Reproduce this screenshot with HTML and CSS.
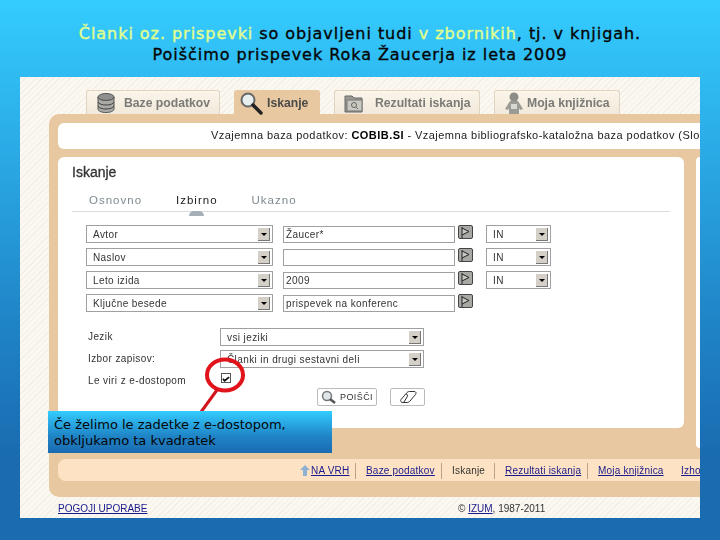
FILE: index.html
```html
<!DOCTYPE html>
<html lang="sl">
<head>
<meta charset="utf-8">
<title>Iskanje</title>
<link rel="stylesheet" href="styles.css">
</head>
<body>
<div class="slide">
  <header class="title">
    <div><span class="hl">Članki oz. prispevki</span> so objavljeni tudi <span class="hl">v zbornikih</span>, tj. v knjigah.</div>
    <div>Poiščimo prispevek Roka Žaucerja iz leta 2009</div>
  </header>
  <main class="shot">
    <nav class="tabs">
      <div class="tab tab-baze">
        <svg class="tab-icon" width="20" height="22" viewBox="0 0 20 22"><ellipse cx="10" cy="5" rx="8" ry="3.500" fill="#8f8f8f" stroke="#555"/><path d="M2 5v12c0 2 3.500 3.500 8 3.500s8-1.500 8-3.500V5c0 2-3.500 3.500-8 3.500S2 7 2 5z" fill="#a9a9a6" stroke="#555"/><path d="M2 10c1 2 4 3 8 3s7-1 8-3M2 14c1 2 4 3 8 3s7-1 8-3" fill="none" stroke="#444"/></svg>
        <span>Baze podatkov</span>
      </div>
      <div class="tab tab-active tab-isk">
        <svg class="tab-icon" width="26" height="24" viewBox="0 0 26 24"><circle cx="10" cy="9" r="6.500" fill="#e8edf0" stroke="#666" stroke-width="2"/><path d="M15 14l8 8" stroke="#222" stroke-width="3.500" stroke-linecap="round"/></svg>
        <span>Iskanje</span>
      </div>
      <div class="tab tab-rez">
        <svg class="tab-icon" width="20" height="20" viewBox="0 0 20 20"><path d="M1 3h7l2 2h8v14H1z" fill="#9a9a92" stroke="#666"/><rect x="3" y="7" width="15" height="11" fill="#c9c9bf" stroke="#777"/><circle cx="10" cy="12" r="2.500" fill="none" stroke="#666"/><path d="M12 14l2 2" stroke="#666"/></svg>
        <span>Rezultati iskanja</span>
      </div>
      <div class="tab tab-moja">
        <svg class="tab-icon" width="20" height="24" viewBox="0 0 20 24"><circle cx="10" cy="6" r="4.500" fill="#8d8d88"/><path d="M6 10h8l5 8-3 1-1-2v6H5v-6l-1 2-3-1z" fill="#9b9b96"/><rect x="7" y="13" width="6" height="5" fill="#d8d8d2"/></svg>
        <span>Moja knjižnica</span>
      </div>
    </nav>
    <section class="panel">
      <div class="infobar">Vzajemna baza podatkov: <b>COBIB.SI</b> - Vzajemna bibliografsko-kataložna baza podatkov (Slovenija)</div>
      <div class="content">
        <div class="card">
          <h1 class="card-title">Iskanje</h1>
          <div class="modes">
            <span class="mode mode-a">Osnovno</span>
            <span class="mode mode-b mode-on">Izbirno</span>
            <span class="mode mode-c">Ukazno</span>
          </div>
          <div class="form">
            <div class="row">
              <div class="sel"><span>Avtor</span><i class="arr"></i></div>
              <div class="inp">Žaucer*</div>
              <div class="flag"><svg width="11" height="11" viewBox="0 0 11 11"><path d="M2 0v11M2 1l7 3.500-7 3.500" fill="#c8c8c4" stroke="#222"/></svg></div>
              <div class="sel sel-op"><span>IN</span><i class="arr"></i></div>
            </div>
            <div class="row">
              <div class="sel"><span>Naslov</span><i class="arr"></i></div>
              <div class="inp"></div>
              <div class="flag"><svg width="11" height="11" viewBox="0 0 11 11"><path d="M2 0v11M2 1l7 3.500-7 3.500" fill="#c8c8c4" stroke="#222"/></svg></div>
              <div class="sel sel-op"><span>IN</span><i class="arr"></i></div>
            </div>
            <div class="row">
              <div class="sel"><span>Leto izida</span><i class="arr"></i></div>
              <div class="inp">2009</div>
              <div class="flag"><svg width="11" height="11" viewBox="0 0 11 11"><path d="M2 0v11M2 1l7 3.500-7 3.500" fill="#c8c8c4" stroke="#222"/></svg></div>
              <div class="sel sel-op"><span>IN</span><i class="arr"></i></div>
            </div>
            <div class="row">
              <div class="sel"><span>Ključne besede</span><i class="arr"></i></div>
              <div class="inp">prispevek na konferenc</div>
              <div class="flag"><svg width="11" height="11" viewBox="0 0 11 11"><path d="M2 0v11M2 1l7 3.500-7 3.500" fill="#c8c8c4" stroke="#222"/></svg></div>
            </div>
            <div class="limits">
              <label class="lim-label">Jezik</label>
              <div class="sel"><span>vsi jeziki</span><i class="arr"></i></div>
              <label class="lim-label">Izbor zapisov:</label>
              <div class="sel"><span>Članki in drugi sestavni deli</span><i class="arr"></i></div>
              <label class="lim-label">Le viri z e-dostopom</label>
              <div class="check"><svg width="9" height="9" viewBox="0 0 9 9"><path d="M1 5l2 2 5-4" fill="none" stroke="#111" stroke-width="2"/></svg></div>
            </div>
            <div class="actions">
              <div class="btn btn-go">
                <svg width="16" height="14" viewBox="0 0 16 14"><circle cx="6" cy="6" r="4.500" fill="#dfe6ea" stroke="#777" stroke-width="1.500"/><path d="M9 9l5 4" stroke="#555" stroke-width="2.500"/></svg>
                <span>POIŠČI</span>
              </div>
              <div class="btn btn-clear">
                <svg width="18" height="12" viewBox="0 0 18 12"><path d="M8 1.500c1-1 2-1 3-1h4c2 0 2.500 1.500 1.500 3L11 10c-1 1-2 1.500-3 1.500H4C2 11.500 1 10 2 8.500z" fill="#fff" stroke="#333"/><path d="M7 3c1.500 0 2 1.500 1 3l-3 5" fill="none" stroke="#333"/></svg>
              </div>
            </div>
          </div>
        </div>
        <div class="strip"></div>
      </div>
      <div class="bottomnav">
        <svg class="up" width="10" height="11" viewBox="0 0 10 11"><path d="M5 0l5 5H7v6H3V5H0z" fill="#8fb0d0"/></svg>
        <a class="nav-link nav-top">NA VRH</a>
        <a class="nav-link nav-baze">Baze podatkov</a>
        <span class="nav-cur">Iskanje</span>
        <a class="nav-link nav-rez">Rezultati iskanja</a>
        <a class="nav-link nav-moja">Moja knjižnica</a>
        <a class="nav-link nav-izh">Izhod</a>
      </div>
    </section>
    <footer class="foot">
      <a class="nav-link foot-l">POGOJI UPORABE</a>
      <span class="foot-c">© <a class="nav-link">IZUM</a>, 1987-2011</span>
    </footer>
  </main>
  <svg class="mark" width="720" height="540" viewBox="0 0 720 540">
    <ellipse cx="225" cy="375" rx="18" ry="15.500" fill="none" stroke="#e1141c" stroke-width="4"/>
    <path d="M217 390L201 412" stroke="#d2141c" stroke-width="3"/>
  </svg>
  <aside class="caption">Če želimo le zadetke z e-dostopom,<br>obkljukamo ta kvadratek</aside>
</div>
</body>
</html>
```
FILE: styles.css
```css
* { box-sizing: border-box; }
html, body { margin: 0; padding: 0; }
body { width: 720px; height: 540px; overflow: hidden; }

.slide {
  position: relative;
  width: 720px;
  height: 540px;
  overflow: hidden;
  background: linear-gradient(180deg, #34ccff 0%, #2aa8e4 30%, #1f84c6 60%, #1a6bb0 85%, #1a6bb0 100%);
}

.title {
  height: 77px;
  padding-top: 23px;
  text-align: center;
  font: 16px/21px "DejaVu Sans", sans-serif;
  letter-spacing: 0.95px;
  -webkit-text-stroke: 0.35px;
  color: #050505;
  white-space: nowrap;
}
.hl { color: #e2ff8c; }

.shot {
  width: 680px;
  height: 441px;
  margin-left: 20px;
  padding: 13px 0 0 29px;
  overflow: hidden;
  background-color: #fbf8f1;
  background-image: repeating-linear-gradient(135deg, #f4efe4 0 1px, #fbf8f1 1px 4px);
  font-family: "Liberation Sans", sans-serif;
  color: #333;
  filter: blur(0.3px);
}

.tabs { display: flex; height: 24px; margin-left: 37px; }
.tab {
  display: flex;
  align-items: center;
  height: 24px;
  padding-left: 9px;
  border: 1px solid #e0d3bf;
  border-bottom: 0;
  border-radius: 3px 3px 0 0;
  background: linear-gradient(#fbf5ea, #f1e9da);
  font-size: 12.200px;
  font-weight: bold;
  color: #7a7a76;
  white-space: nowrap;
}
.tab-active { background: #e8c8a0; border-color: #e8c8a0; color: #4a4a4a; padding-left: 3px; }
.tab-icon { flex: none; }
.tab-baze { width: 134px; gap: 8px; }
.tab-isk { width: 86px; margin-left: 14px; gap: 3px; }
.tab-rez { width: 146px; margin-left: 14px; gap: 11px; }
.tab-moja { width: 126px; margin-left: 14px; gap: 3px; }

.panel {
  width: 651px;
  height: 383px;
  padding: 9px 0 0 9px;
  overflow: hidden;
  border-radius: 10px 0 0 10px;
  background: #e8c8a0;
}

.infobar {
  height: 26px;
  padding-left: 153px;
  margin-bottom: 8px;
  border-radius: 6px 0 0 6px;
  background: #fff;
  font-size: 11px;
  letter-spacing: 0.45px;
  line-height: 25px;
  white-space: nowrap;
  overflow: hidden;
  color: #222;
}
.infobar b { color: #000; }

.content { display: flex; align-items: flex-start; gap: 12px; height: 302px; }
.card {
  flex: none;
  width: 626px;
  height: 271px;
  padding: 7px 14px 0;
  border-radius: 6px;
  background: #fff;
}
.card-title { margin: 0; font-size: 14px; line-height: 17px; font-weight: normal; color: #333; -webkit-text-stroke: 0.3px #333; }
.strip { flex: none; width: 4px; height: 291px; background: #fff; border-radius: 4px 0 0 4px; }

.modes { display: flex; height: 30px; padding-top: 13px; font-size: 11.500px; letter-spacing: 1px; color: #7f8a90; }
.mode-a { margin-left: 17px; }
.mode-b { margin-left: 34px; }
.mode-c { margin-left: 34px; }
.mode-on { color: #222; position: relative; }
.mode-on::after {
  content: "";
  position: absolute;
  left: 13px;
  bottom: -5px;
  width: 15px;
  height: 5px;
  border-radius: 8px 8px 0 0;
  background: #a4afb8;
}

.form { width: 598px; padding: 13px 0 0 14px; border-top: 1px solid #dcdcdc; font-size: 10px; letter-spacing: 0.4px; color: #333; }

.row { display: flex; align-items: flex-start; height: 23px; }
.sel {
  display: flex;
  flex: none;
  align-items: center;
  justify-content: space-between;
  width: 187px;
  height: 18px;
  padding: 0 2px 0 6px;
  border: 1px solid #a0a0a0;
  background: #fff;
  white-space: nowrap;
}
.sel-op { width: 65px; margin-left: 13px; }
.arr {
  flex: none;
  position: relative;
  width: 12px;
  height: 13px;
  background: #d4d0c8;
  border-right: 1px solid #777;
  border-bottom: 1px solid #777;
}
.arr::after {
  content: "";
  position: absolute;
  left: 3px;
  top: 5px;
  border: 3px solid transparent;
  border-top: 3px solid #000;
}
.inp {
  flex: none;
  width: 172px;
  height: 17px;
  margin: 1px 0 0 10px;
  padding-left: 2px;
  border: 1px solid #a0a0a0;
  background: #fff;
  line-height: 15px;
  white-space: nowrap;
  overflow: hidden;
}
.flag {
  display: flex;
  flex: none;
  align-items: center;
  justify-content: center;
  width: 15px;
  height: 14px;
  margin-left: 3px;
  border: 1px solid #444;
  border-radius: 2px;
  background: #a8a8a4;
}

.limits {
  display: grid;
  grid-template-columns: 132px 204px;
  grid-auto-rows: 22px;
  margin: 11px 0 0 2px;
  align-items: start;
}
.lim-label { line-height: 18px; color: #333; }
.limits .sel { width: 204px; }
.check {
  display: flex;
  align-items: center;
  justify-content: center;
  width: 10px;
  height: 10px;
  margin: 1px 0 0 1px;
  border: 1px solid #555;
  background: #fff;
}

.actions { display: flex; justify-content: flex-end; gap: 13px; width: 339px; margin-top: -6px; }
.btn {
  display: flex;
  align-items: center;
  justify-content: center;
  gap: 3px;
  height: 18px;
  border: 1px solid #bbb;
  border-radius: 2px;
  background: #fff;
  font-size: 9px;
}
.btn-go { width: 60px; }
.btn-clear { width: 35px; }

.bottomnav {
  display: flex;
  align-items: center;
  height: 22px;
  padding: 1px 0 0 242px;
  border-radius: 8px 0 0 8px;
  background: #fde3c3;
  font-size: 10px;
  letter-spacing: 0.2px;
  white-space: nowrap;
  color: #333;
}
.up { flex: none; margin-right: 1px; }
.nav-link { color: #1a1a8c; text-decoration: underline; }
.nav-top, .nav-baze, .nav-cur, .nav-rez, .nav-moja { display: block; flex: none; line-height: 16px; border-right: 1px solid #b9a48a; }
.nav-top { width: 45px; }
.nav-baze { width: 86px; padding-left: 10px; }
.nav-cur { width: 53px; padding-left: 10px; }
.nav-rez { width: 93px; padding-left: 10px; }
.nav-moja { width: 93px; padding-left: 10px; border-right: 0; }
.nav-izh { flex: none; }

.foot {
  display: flex;
  height: 21px;
  padding: 1px 0 0 9px;
  font-size: 10px;
  line-height: 21px;
  color: #333;
}
.foot-l { width: 400px; }
.foot-c { white-space: nowrap; }

.mark { position: absolute; left: 0; top: 0; pointer-events: none; }
.caption {
  position: absolute;
  left: 48px;
  top: 411px;
  width: 284px;
  height: 42px;
  padding: 6px 0 0 6px;
  background: linear-gradient(180deg, #34ccff 0%, #1f84c6 60%, #1a6bb0 100%);
  font: 13px/16px "DejaVu Sans", sans-serif;
  color: #050505;
  white-space: nowrap;
}
```
